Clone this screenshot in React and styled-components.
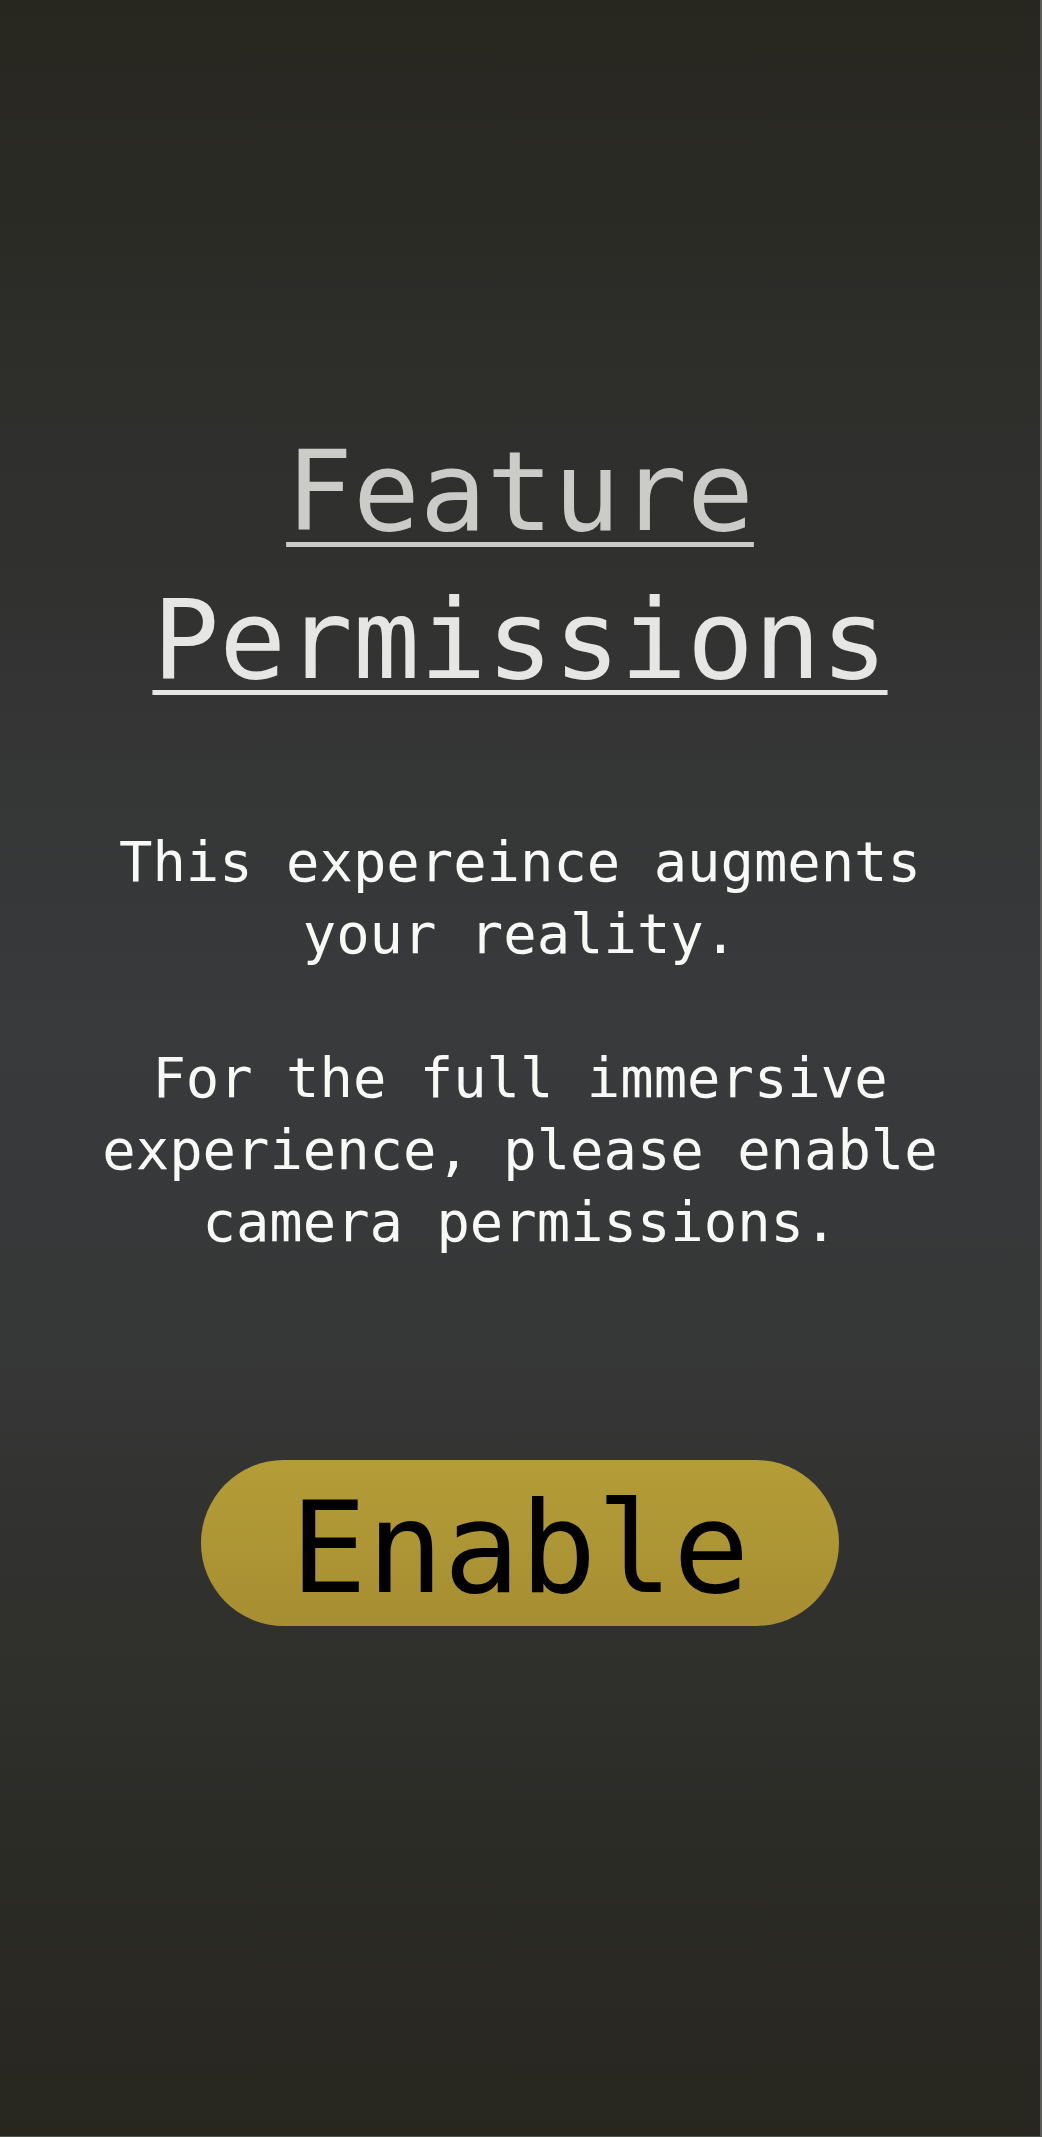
import React from "react";
import styled, { createGlobalStyle } from "styled-components";

const GlobalStyle = createGlobalStyle`
  html, body {
    margin: 0;
    padding: 0;
    background: #2a2a25;
  }
  * { box-sizing: border-box; }
`;

const Page = styled.main`
  min-height: 2137px;
  width: 100%;
  display: flex;
  flex-direction: column;
  align-items: center;
  padding-top: 418px;
  font-family: "DejaVu Sans Mono", "Liberation Mono", monospace;
  text-align: center;
  background: linear-gradient(
    180deg,
    #27261f 0%,
    #2f302d 22%,
    #393a3c 48%,
    #363737 62%,
    #2e2e2a 80%,
    #27261f 100%
  );
  border-right: 2px solid #5c5c5a;
  border-bottom: 1px solid #55554f;
`;

const Title = styled.h1`
  margin: 0;
  font-size: 111px;
  font-weight: 400;
  line-height: 148px;
`;

const TitleLine = styled.span`
  display: block;
  text-decoration: underline;
  text-decoration-thickness: 5px;
  text-underline-offset: 12px;
  text-decoration-color: ${(p) => p.$tone};
  color: ${(p) => p.$tone};
`;

const Copy = styled.p`
  margin: 112px 0 0;
  color: #f8f8f6;
  font-size: 55.5px;
  line-height: 72px;
  max-width: 1000px;
`;

const Gap = styled.span`
  display: block;
  height: 72px;
`;

const EnableButton = styled.button`
  margin-top: 202px;
  width: 638px;
  height: 166px;
  border: none;
  border-radius: 83px;
  background: linear-gradient(180deg, #b49d37 0%, #a68e32 100%);
  color: #000;
  font-family: "DejaVu Sans Mono", "Liberation Mono", monospace;
  font-size: 127px;
  line-height: 1;
  padding: 10px 0 0;
  display: flex;
  align-items: center;
  justify-content: center;
  cursor: pointer;
`;

export default function App() {
  return (
    <>
      <GlobalStyle />
      <Page>
        <Title>
          <TitleLine $tone="#cbcbc7">Feature</TitleLine>
          <TitleLine $tone="#e6e6e4">Permissions</TitleLine>
        </Title>
        <Copy>
          This expereince augments
          <br />
          your reality.
          <Gap />
          For the full immersive
          <br />
          experience, please enable
          <br />
          camera permissions.
        </Copy>
        <EnableButton>Enable</EnableButton>
      </Page>
    </>
  );
}
